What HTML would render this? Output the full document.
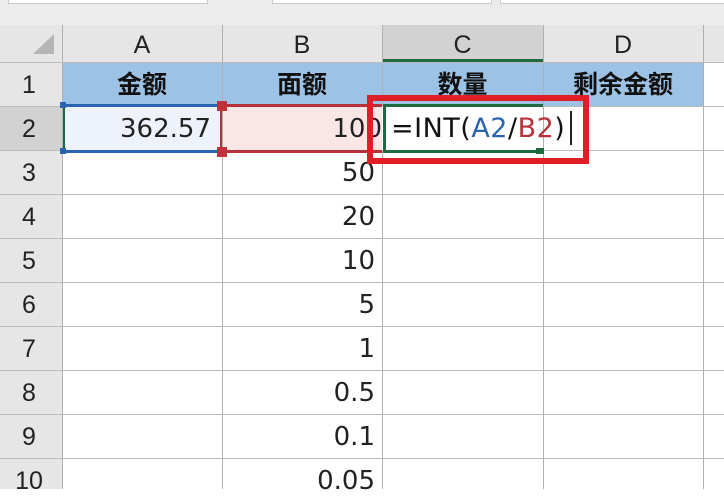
<!DOCTYPE html><html><head><meta charset="utf-8"><style>
body{margin:0;width:724px;height:489px;overflow:hidden;background:#fff;font-family:"Liberation Sans","Noto Sans CJK SC",sans-serif;position:relative}
div{position:absolute;box-sizing:border-box}
.h{background:#e6e6e6;color:#222;font-size:25px;text-align:center}
.n{font-family:"DejaVu Sans",sans-serif;font-size:26px;color:#222;text-align:right;padding-right:7px;overflow:hidden;white-space:nowrap}
.vl{width:1px;background:#b0b0b0}
.hl{height:1px;background:#bcbcbc}
.b{font-weight:bold;font-size:25px;text-align:center;color:#111;line-height:43px}
</style></head><body>
<div style="left:0;top:0;width:724px;height:25px;background:#ececec"></div>
<div style="left:8px;top:-2px;width:200px;height:6px;background:#fff;border:1px solid #ccc"></div>
<div style="left:272px;top:-2px;width:220px;height:6px;background:#fff;border:1px solid #ccc"></div>
<div style="left:500px;top:-2px;width:230px;height:6px;background:#fff;border:1px solid #ccc"></div>
<div class="h" style="left:0;top:25px;width:724px;height:37px"></div>
<div style="left:382px;top:25px;width:161px;height:37px;background:#d2d2d2;border-bottom:3px solid #1e6b41"></div>
<div class="h" style="left:0;top:62px;width:62px;height:427px"></div>
<div style="left:0;top:106px;width:62px;height:44px;background:#d2d2d2"></div>
<svg style="position:absolute;left:30px;top:32px" width="26" height="24"><polygon points="24,2 24,22 3,22" fill="#b5b5b5"/></svg>
<div class="h" style="left:62px;top:27px;width:160px;line-height:37px;background:none">A</div>
<div class="h" style="left:222px;top:27px;width:160px;line-height:37px;background:none">B</div>
<div class="h" style="left:382px;top:27px;width:161px;line-height:37px;background:none">C</div>
<div class="h" style="left:543px;top:27px;width:160px;line-height:37px;background:none">D</div>
<div style="left:62px;top:62px;width:641px;height:44px;background:#9cc3e6"></div>
<div style="left:62px;top:106px;width:160px;height:44px;background:#eef2fb"></div>
<div style="left:222px;top:106px;width:160px;height:44px;background:#fbe6e6"></div>
<div class="vl" style="left:62px;top:25px;height:464px"></div>
<div class="vl" style="left:222px;top:25px;height:464px"></div>
<div class="vl" style="left:382px;top:25px;height:464px"></div>
<div class="vl" style="left:543px;top:25px;height:464px"></div>
<div class="vl" style="left:703px;top:25px;height:464px"></div>
<div class="hl" style="left:0;top:62px;width:724px"></div>
<div class="hl" style="left:0;top:106px;width:724px"></div>
<div class="hl" style="left:0;top:150px;width:724px"></div>
<div class="hl" style="left:0;top:194px;width:724px"></div>
<div class="hl" style="left:0;top:238px;width:724px"></div>
<div class="hl" style="left:0;top:282px;width:724px"></div>
<div class="hl" style="left:0;top:326px;width:724px"></div>
<div class="hl" style="left:0;top:370px;width:724px"></div>
<div class="hl" style="left:0;top:414px;width:724px"></div>
<div class="hl" style="left:0;top:458px;width:724px"></div>
<div class="h" style="left:0;top:62px;width:58px;line-height:46px;background:none">1</div>
<div class="h" style="left:0;top:106px;width:58px;line-height:46px;background:none">2</div>
<div class="h" style="left:0;top:150px;width:58px;line-height:46px;background:none">3</div>
<div class="h" style="left:0;top:194px;width:58px;line-height:46px;background:none">4</div>
<div class="h" style="left:0;top:238px;width:58px;line-height:46px;background:none">5</div>
<div class="h" style="left:0;top:282px;width:58px;line-height:46px;background:none">6</div>
<div class="h" style="left:0;top:326px;width:58px;line-height:46px;background:none">7</div>
<div class="h" style="left:0;top:370px;width:58px;line-height:46px;background:none">8</div>
<div class="h" style="left:0;top:414px;width:58px;line-height:46px;background:none">9</div>
<div class="h" style="left:0;top:458px;width:58px;line-height:46px;background:none">10</div>
<div class="b" style="left:62px;top:64px;width:160px">金额</div>
<div class="b" style="left:222px;top:64px;width:160px">面额</div>
<div class="b" style="left:382px;top:64px;width:161px">数量</div>
<div class="b" style="left:543px;top:64px;width:160px">剩余金额</div>
<div class="n" style="left:62px;top:106px;width:160px;line-height:46px;padding-right:11px">362.57</div>
<div class="n" style="left:222px;top:106px;width:160px;line-height:46px;padding-right:0">100</div>
<div class="n" style="left:222px;top:150px;width:160px;line-height:46px">50</div>
<div class="n" style="left:222px;top:194px;width:160px;line-height:46px">20</div>
<div class="n" style="left:222px;top:238px;width:160px;line-height:46px">10</div>
<div class="n" style="left:222px;top:282px;width:160px;line-height:46px">5</div>
<div class="n" style="left:222px;top:326px;width:160px;line-height:46px">1</div>
<div class="n" style="left:222px;top:370px;width:160px;line-height:46px">0.5</div>
<div class="n" style="left:222px;top:414px;width:160px;line-height:46px">0.1</div>
<div class="n" style="left:222px;top:458px;width:160px;line-height:46px">0.05</div>
<div style="left:63px;top:104px;width:159px;height:49px;border-top:3px solid #2b63b4;border-bottom:3px solid #2b63b4;border-left:2px solid #1e6b41"></div>
<div style="left:60px;top:102px;width:6px;height:6px;background:#2b63b4"></div>
<div style="left:60px;top:148px;width:6px;height:6px;background:#2b63b4"></div>
<div style="left:220px;top:104px;width:162px;height:49px;border-top:3px solid #b5323a;border-bottom:3px solid #b5323a;border-left:2px solid #b5323a"></div>
<div style="left:217px;top:101px;width:10px;height:10px;background:#c0323a"></div>
<div style="left:217px;top:147px;width:10px;height:10px;background:#c0323a"></div>
<div style="left:382px;top:106px;width:161px;height:44px;background:#fff"></div>
<div style="left:383px;top:104px;width:160px;height:49px;border-top:3px solid #1e6b41;border-bottom:3px solid #1e6b41;border-left:3px solid #1e6b41"></div>
<div style="left:536px;top:148px;width:8px;height:6px;background:#1e6b41"></div>
<div style="left:391px;top:106px;font-family:'DejaVu Sans',sans-serif;font-size:27px;line-height:46px;color:#111;white-space:nowrap;letter-spacing:0.5px">=INT(<span style="color:#2b63b4">A2</span>/<span style="color:#b5323a">B2</span>)</div>
<div style="left:570px;top:111px;width:2px;height:34px;background:#222"></div>
<div style="left:367px;top:95px;width:222px;height:69px;border:6px solid #e01e26"></div>
</body></html>
